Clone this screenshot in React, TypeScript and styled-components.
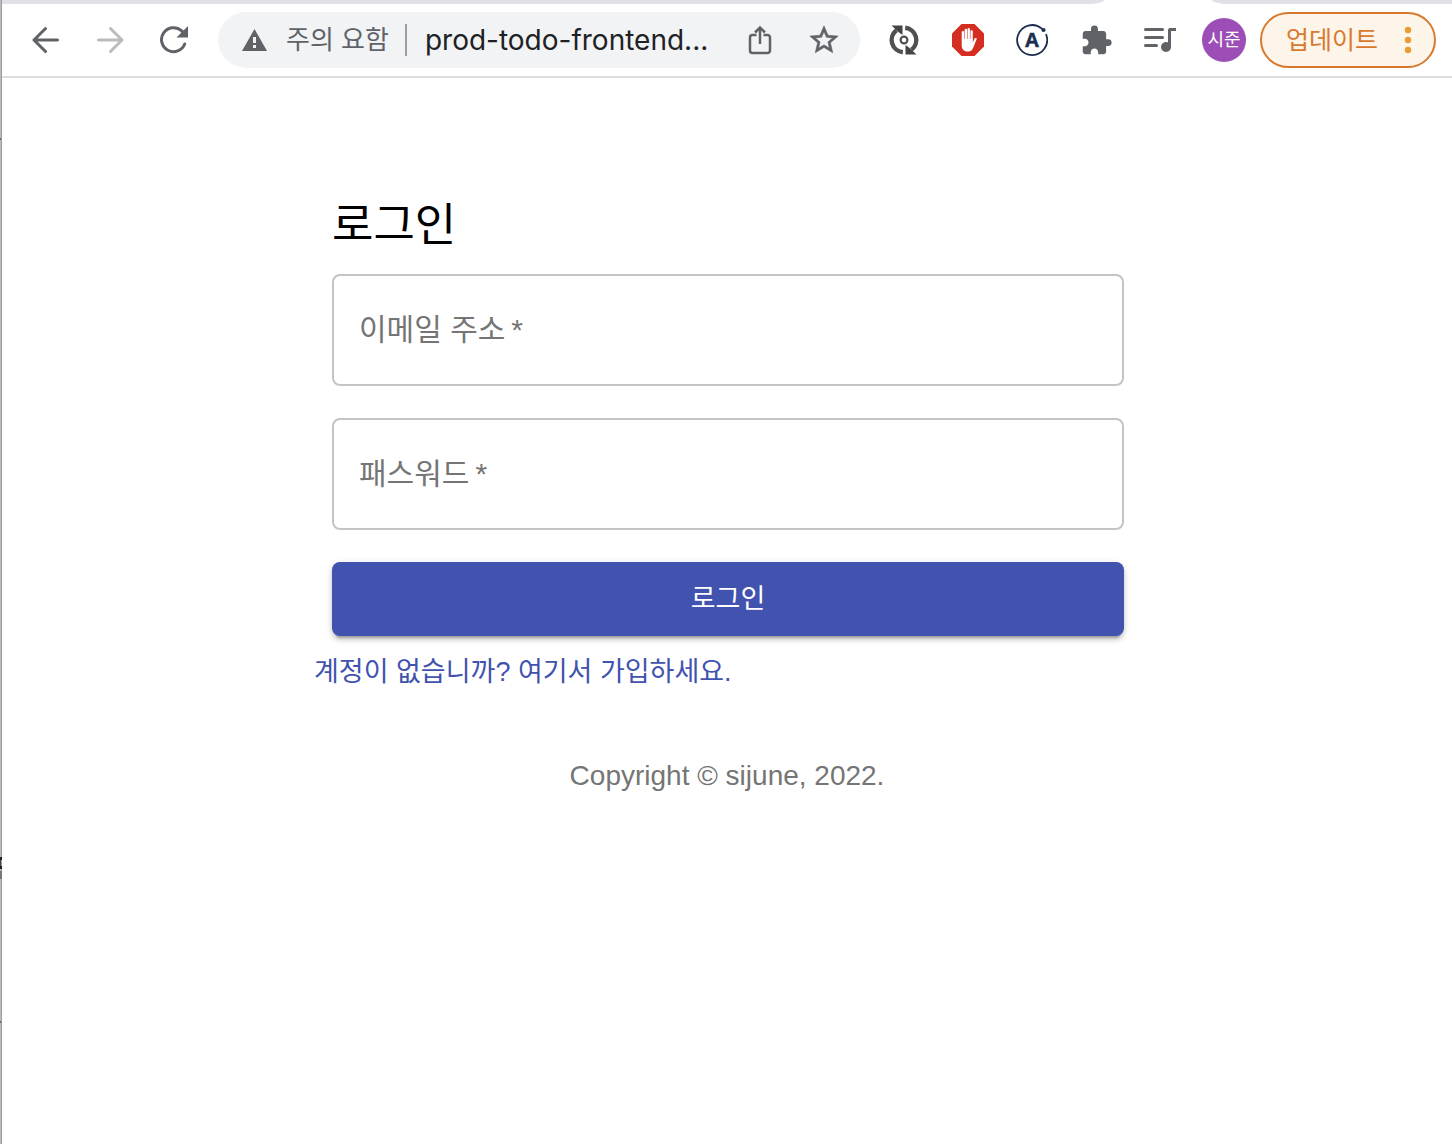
import React from 'react';
import styled, { createGlobalStyle } from 'styled-components';

const GlobalStyle = createGlobalStyle`
  *, *::before, *::after { box-sizing: border-box; }
  html, body, #root { margin: 0; min-height: 100%; }
  body {
    background: #fff;
    font-family: "Liberation Sans", "Noto Sans CJK KR", sans-serif;
  }
  button, input { font-family: inherit; }
`;

/* The two-pixel strip on the left is the edge of the window lying behind. */
const Window = styled.div`
  min-height: 100vh;
  display: flex;
  flex-direction: column;
  padding-left: 2px;
  background:
    linear-gradient(#222, #222) 0 857px / 2px 3px no-repeat,
    linear-gradient(#444, #444) 0 860px / 1px 6px no-repeat,
    linear-gradient(#222, #222) 0 866px / 2px 3px no-repeat,
    linear-gradient(#777, #777) 0 871px / 2px 8px no-repeat,
    linear-gradient(#666, #666) 0 138px / 1px 2px no-repeat,
    linear-gradient(#666, #666) 0 1021px / 1px 2px no-repeat,
    linear-gradient(to right, #bcbcbc 1px, #9c9c9c 1px) 0 0 / 2px 100% no-repeat,
    #fff;
`;

const TabStrip = styled.div`
  display: grid;
  grid-template-columns: 1102px 108px 1fr;
  height: 4px;
`;

const Tab = styled.div<{ $side: 'left' | 'right' }>`
  grid-column: ${(p) => (p.$side === 'left' ? 1 : 3)};
  background: #dfe1e5;
  border-radius: ${(p) => (p.$side === 'left' ? '0 0 16px 0 / 0 0 4px 0' : '0 0 0 16px / 0 0 0 4px')};
`;

const Toolbar = styled.header`
  display: flex;
  align-items: center;
  height: 74px;
  padding: 0 16px 0 12px;
  border-bottom: 2px solid #dadce0;
`;

const IconButton = styled.button<{ $tone?: string }>`
  display: flex;
  align-items: center;
  justify-content: center;
  flex: none;
  width: 64px;
  height: 56px;
  padding: 0;
  border: 0;
  background: none;
  color: ${(p) => p.$tone ?? '#5f6368'};
  cursor: pointer;
`;

const AddressBar = styled.div`
  display: flex;
  align-items: center;
  flex: 1;
  min-width: 0;
  height: 56px;
  margin-left: 12px;
  padding: 0 4px 0 22px;
  border-radius: 28px;
  background: #f1f3f4;
`;

const SecurityChip = styled.button`
  display: flex;
  align-items: center;
  gap: 16px;
  flex: none;
  height: 32px;
  padding: 0 16px 0 0;
  border: 0;
  border-right: 2px solid #9aa0a6;
  background: none;
  color: #5f6368;
  font-size: 26px;
  line-height: 32px;
  cursor: pointer;
`;

const UrlInput = styled.input`
  flex: 1;
  min-width: 0;
  margin-left: 16px;
  padding: 0 0 0 2px;
  border: 0;
  outline: 0;
  background: none;
  color: #202124;
  font-family: Inter, sans-serif;
  font-size: 28px;
  line-height: 40px;
`;

const Extensions = styled.div`
  display: flex;
  margin-left: 12px;
`;

const Avatar = styled.button`
  flex: none;
  width: 44px;
  height: 44px;
  margin: 0 14px 0 10px;
  padding: 0;
  border: 0;
  border-radius: 50%;
  background: #9c4db6;
  color: #fff;
  font-size: 18px;
  line-height: 44px;
  cursor: pointer;
`;

const UpdateButton = styled.button`
  display: flex;
  align-items: center;
  justify-content: space-between;
  flex: none;
  width: 176px;
  height: 56px;
  padding: 0 22px 0 24px;
  border: 2px solid #d87a2d;
  border-radius: 28px;
  background: #fdf4ea;
  color: #d87a2d;
  font-size: 25px;
  line-height: 32px;
  cursor: pointer;
`;

const Main = styled.main`
  display: flex;
  flex-direction: column;
  width: 100%;
  max-width: 826px;
  margin: 0 auto;
  padding-top: 116px;
`;

const LoginForm = styled.form`
  display: flex;
  flex-direction: column;
  padding: 0 16px 0 18px;
`;

const Title = styled.h1`
  margin: 0 0 16px;
  color: #000;
  font-size: 45px;
  font-weight: 400;
  line-height: 64px;
`;

const Field = styled.div`
  display: grid;
  align-items: center;
  height: 112px;
  margin-bottom: 32px;
  border: 2px solid #c4c4c4;
  border-radius: 8px;
  &:focus-within { border-color: #3f51b5; }
`;

const FieldLabel = styled.label`
  grid-area: 1 / 1;
  padding: 0 25px;
  color: #757575;
  font-size: 30px;
  line-height: 40px;
  pointer-events: none;
`;

const FieldInput = styled.input`
  grid-area: 1 / 1;
  width: 100%;
  height: 100%;
  padding: 0 25px;
  border: 0;
  outline: 0;
  background: none;
  font-size: 30px;
  &:not(:placeholder-shown) + ${FieldLabel} { opacity: 0; }
`;

const SubmitButton = styled.button`
  height: 74px;
  padding: 0 32px;
  border: 0;
  border-radius: 8px;
  background: #4152af;
  color: #fff;
  font-size: 27px;
  line-height: 40px;
  box-shadow: 0 6px 2px -4px rgba(0, 0, 0, 0.2), 0 4px 4px 0 rgba(0, 0, 0, 0.14),
    0 2px 10px 0 rgba(0, 0, 0, 0.12);
  cursor: pointer;
`;

const SignUpLink = styled.a`
  align-self: flex-start;
  margin-top: 16px;
  color: #4152af;
  font-size: 27px;
  line-height: 40px;
  text-decoration: none;
`;

const Copyright = styled.p`
  margin: 64px 0 0;
  color: #757575;
  font-size: 28px;
  line-height: 40px;
  text-align: center;
`;

const BackIcon = () => (
  <svg width="28" height="28" viewBox="0 0 28 28" fill="none" stroke="currentColor" strokeWidth="3" strokeLinecap="round" strokeLinejoin="round">
    <path d="M25.500 14H3M13.500 2.500L2 14l11.500 11.500" />
  </svg>
);

const ForwardIcon = () => (
  <svg width="28" height="28" viewBox="0 0 28 28" fill="none" stroke="currentColor" strokeWidth="3" strokeLinecap="round" strokeLinejoin="round">
    <path d="M2.500 14H25M14.500 2.500L26 14 14.500 25.500" />
  </svg>
);

const ReloadIcon = () => (
  <svg width="28" height="28" viewBox="0 0 28 28" fill="none">
    <path d="M24.700 18A12 12 0 1 1 21.500 4.700L24 7.200" stroke="currentColor" strokeWidth="3" strokeLinecap="round" />
    <path d="M28 0v11.500H16.500z" fill="currentColor" />
  </svg>
);

const WarningIcon = () => (
  <svg width="30" height="30" viewBox="0 0 30 30">
    <path d="M14.500 4L27 26H2z" fill="currentColor" />
    <path d="M13 12h3v6h-3zM13 20h3v3h-3z" fill="#f1f3f4" />
  </svg>
);

const ShareIcon = () => (
  <svg width="32" height="32" viewBox="0 0 32 32" fill="none" stroke="currentColor" strokeWidth="2.500">
    <path d="M12.500 11H8.500a2.500 2.500 0 0 0-2.500 2.500v13A2.500 2.500 0 0 0 8.500 29h15a2.500 2.500 0 0 0 2.500-2.500v-13a2.500 2.500 0 0 0-2.500-2.500H19.500" />
    <path d="M16 20V4M11 8.500l5-5 5 5" />
  </svg>
);

const StarIcon = () => (
  <svg width="34" height="34" viewBox="0 0 24 24" fill="currentColor" stroke="currentColor" strokeWidth="0.400">
    <path d="M22 9.240l-7.190-.62L12 2 9.190 8.630 2 9.240l5.460 4.730L5.820 21 12 17.270 18.180 21l-1.630-7.030L22 9.240zM12 15.400l-3.760 2.270 1-4.280-3.320-2.880 4.380-.38L12 6.100l1.710 4.040 4.380.38-3.320 2.880 1 4.280L12 15.400z" />
  </svg>
);

const SyncIcon = () => (
  <svg width="32" height="32" viewBox="0 0 32 32" fill="none">
    <g stroke="#505050" strokeWidth="4.400">
      <path d="M14.800 28.200A12.300 12.300 0 0 1 8.500 6.200" />
      <path d="M17.200 3.800A12.300 12.300 0 0 1 23.500 25.800" />
    </g>
    <path d="M3.500 1.500h11V11l-3.500-2.500z M28.500 30.500h-11V21l3.500 2.500z" fill="#444" />
    <circle cx="16" cy="16" r="3.400" stroke="#505050" strokeWidth="2.200" />
  </svg>
);

const BlockIcon = () => (
  <svg width="32" height="32" viewBox="0 0 32 32">
    <path d="M9.500 0h13L32 9.500v13L22.500 32h-13L0 22.500v-13z" fill="#d52d20" />
    <path
      d="M11.200 18V8.300a1.200 1.200 0 0 1 2.400 0V15h.5V6a1.200 1.200 0 0 1 2.400 0v9h.5V5.200a1.200 1.200 0 0 1 2.400 0V15h.5V7.500a1.200 1.200 0 0 1 2.400 0v11l1.300-3c.5-1.200 1.200-1.800 2.400-1.300.4.200.3.600.1 1l-3.300 8.300c-1 2.800-2.500 4-5.300 4-4.500 0-6.300-2.500-6.300-6.500z"
      fill="#fff"
      transform="translate(-1.500 0)"
    />
  </svg>
);

const ApolloIcon = () => (
  <svg width="32" height="32" viewBox="0 0 32 32" fill="none">
    <path d="M30.200 10.800A15 15 0 1 1 25.800 4.600" stroke="#1b2e50" strokeWidth="1.800" strokeLinecap="round" />
    <circle cx="27.500" cy="6" r="2.100" fill="#1b2e50" />
    <text x="16" y="22.500" textAnchor="middle" fontFamily="Liberation Sans, sans-serif" fontWeight="700" fontSize="20" fill="#1b2e50" stroke="#1b2e50" strokeWidth="0.600">
      A
    </text>
  </svg>
);

const PuzzleIcon = () => (
  <svg width="33" height="33" viewBox="0 0 24 24" fill="currentColor">
    <path d="M20.500 11H19V7c0-1.100-.9-2-2-2h-4V3.500a2.500 2.500 0 0 0-5 0V5H4c-1.100 0-1.990.9-1.990 2v3.800H3.500c1.490 0 2.700 1.210 2.700 2.700s-1.210 2.700-2.700 2.700H2V20c0 1.100.9 2 2 2h3.800v-1.500c0-1.490 1.210-2.700 2.700-2.700s2.700 1.210 2.700 2.700V22H17c1.100 0 2-.9 2-2v-4h1.500a2.500 2.500 0 0 0 0-5z" />
  </svg>
);

const PlaylistIcon = () => (
  <svg width="32" height="28" viewBox="0 0 32 28">
    <path d="M1.500 3.500h17M1.500 11.500h17M1.500 19.500h11" stroke="currentColor" strokeWidth="3" strokeLinecap="round" />
    <path d="M24 4a2 2 0 0 1 2-2h6v3h-5v16h-3z" fill="currentColor" />
    <circle cx="22" cy="21" r="5" fill="currentColor" />
  </svg>
);

const DotsIcon = () => (
  <svg width="8" height="28" viewBox="0 0 8 28" fill="#eb9c32">
    <circle cx="4" cy="4" r="3.200" />
    <circle cx="4" cy="14" r="3.200" />
    <circle cx="4" cy="24" r="3.200" />
  </svg>
);

export default function App() {
  return (
    <>
      <GlobalStyle />
      <Window>
        <TabStrip>
          <Tab $side="left" />
          <Tab $side="right" />
        </TabStrip>
        <Toolbar>
          <IconButton aria-label="뒤로"><BackIcon /></IconButton>
          <IconButton aria-label="앞으로" $tone="#bbbcbe"><ForwardIcon /></IconButton>
          <IconButton aria-label="새로고침"><ReloadIcon /></IconButton>
          <AddressBar>
            <SecurityChip><WarningIcon />주의 요함</SecurityChip>
            <UrlInput aria-label="주소" defaultValue="prod-todo-frontend..." />
            <IconButton aria-label="공유"><ShareIcon /></IconButton>
            <IconButton aria-label="북마크"><StarIcon /></IconButton>
          </AddressBar>
          <Extensions>
            <IconButton aria-label="동기화"><SyncIcon /></IconButton>
            <IconButton aria-label="광고 차단"><BlockIcon /></IconButton>
            <IconButton aria-label="Apollo"><ApolloIcon /></IconButton>
            <IconButton aria-label="확장 프로그램"><PuzzleIcon /></IconButton>
            <IconButton aria-label="미디어"><PlaylistIcon /></IconButton>
          </Extensions>
          <Avatar>시준</Avatar>
          <UpdateButton>업데이트<DotsIcon /></UpdateButton>
        </Toolbar>
        <Main>
          <LoginForm onSubmit={(e) => e.preventDefault()}>
            <Title>로그인</Title>
            <Field>
              <FieldInput id="email" type="email" placeholder=" " required />
              <FieldLabel htmlFor="email">이메일 주소&thinsp;*</FieldLabel>
            </Field>
            <Field>
              <FieldInput id="password" type="password" placeholder=" " required />
              <FieldLabel htmlFor="password">패스워드&thinsp;*</FieldLabel>
            </Field>
            <SubmitButton type="submit">로그인</SubmitButton>
          </LoginForm>
          <SignUpLink href="#signup">계정이 없습니까? 여기서 가입하세요.</SignUpLink>
          <Copyright>Copyright © sijune, 2022.</Copyright>
        </Main>
      </Window>
    </>
  );
}
